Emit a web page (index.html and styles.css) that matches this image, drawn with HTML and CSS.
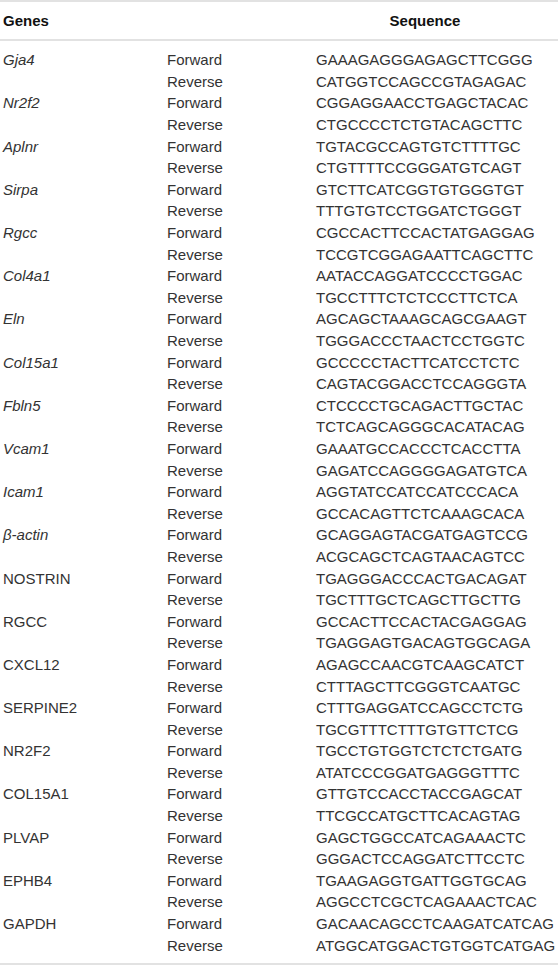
FILE: index.html
```html
<!DOCTYPE html>
<html lang="en">
<head>
    <meta charset="UTF-8">
    <meta name="viewport" content="width=device-width, initial-scale=1.0">
    <title>Primer sequences</title>
    <link rel="stylesheet" href="styles.css">
</head>
<body>
    <table class="primers">
        <colgroup>
            <col class="col-gene">
            <col class="col-dir">
            <col class="col-seq">
        </colgroup>
        <thead>
            <tr>
                <th class="gene">Genes</th>
                <th></th>
                <th class="seq">Sequence</th>
            </tr>
        </thead>
        <tbody>
            <tr><td class="gene" rowspan="2"><i>Gja4</i></td><td>Forward</td><td>GAAAGAGGGAGAGCTTCGGG</td></tr>
            <tr><td>Reverse</td><td>CATGGTCCAGCCGTAGAGAC</td></tr>
            <tr><td class="gene" rowspan="2"><i>Nr2f2</i></td><td>Forward</td><td>CGGAGGAACCTGAGCTACAC</td></tr>
            <tr><td>Reverse</td><td>CTGCCCCTCTGTACAGCTTC</td></tr>
            <tr><td class="gene" rowspan="2"><i>Aplnr</i></td><td>Forward</td><td>TGTACGCCAGTGTCTTTTGC</td></tr>
            <tr><td>Reverse</td><td>CTGTTTTCCGGGATGTCAGT</td></tr>
            <tr><td class="gene" rowspan="2"><i>Sirpa</i></td><td>Forward</td><td>GTCTTCATCGGTGTGGGTGT</td></tr>
            <tr><td>Reverse</td><td>TTTGTGTCCTGGATCTGGGT</td></tr>
            <tr><td class="gene" rowspan="2"><i>Rgcc</i></td><td>Forward</td><td>CGCCACTTCCACTATGAGGAG</td></tr>
            <tr><td>Reverse</td><td>TCCGTCGGAGAATTCAGCTTC</td></tr>
            <tr><td class="gene" rowspan="2"><i>Col4a1</i></td><td>Forward</td><td>AATACCAGGATCCCCTGGAC</td></tr>
            <tr><td>Reverse</td><td>TGCCTTTCTCTCCCTTCTCA</td></tr>
            <tr><td class="gene" rowspan="2"><i>Eln</i></td><td>Forward</td><td>AGCAGCTAAAGCAGCGAAGT</td></tr>
            <tr><td>Reverse</td><td>TGGGACCCTAACTCCTGGTC</td></tr>
            <tr><td class="gene" rowspan="2"><i>Col15a1</i></td><td>Forward</td><td>GCCCCCTACTTCATCCTCTC</td></tr>
            <tr><td>Reverse</td><td>CAGTACGGACCTCCAGGGTA</td></tr>
            <tr><td class="gene" rowspan="2"><i>Fbln5</i></td><td>Forward</td><td>CTCCCCTGCAGACTTGCTAC</td></tr>
            <tr><td>Reverse</td><td>TCTCAGCAGGGCACATACAG</td></tr>
            <tr><td class="gene" rowspan="2"><i>Vcam1</i></td><td>Forward</td><td>GAAATGCCACCCTCACCTTA</td></tr>
            <tr><td>Reverse</td><td>GAGATCCAGGGGAGATGTCA</td></tr>
            <tr><td class="gene" rowspan="2"><i>Icam1</i></td><td>Forward</td><td>AGGTATCCATCCATCCCACA</td></tr>
            <tr><td>Reverse</td><td>GCCACAGTTCTCAAAGCACA</td></tr>
            <tr><td class="gene" rowspan="2"><i>β-actin</i></td><td>Forward</td><td>GCAGGAGTACGATGAGTCCG</td></tr>
            <tr><td>Reverse</td><td>ACGCAGCTCAGTAACAGTCC</td></tr>
            <tr><td class="gene" rowspan="2">NOSTRIN</td><td>Forward</td><td>TGAGGGACCCACTGACAGAT</td></tr>
            <tr><td>Reverse</td><td>TGCTTTGCTCAGCTTGCTTG</td></tr>
            <tr><td class="gene" rowspan="2">RGCC</td><td>Forward</td><td>GCCACTTCCACTACGAGGAG</td></tr>
            <tr><td>Reverse</td><td>TGAGGAGTGACAGTGGCAGA</td></tr>
            <tr><td class="gene" rowspan="2">CXCL12</td><td>Forward</td><td>AGAGCCAACGTCAAGCATCT</td></tr>
            <tr><td>Reverse</td><td>CTTTAGCTTCGGGTCAATGC</td></tr>
            <tr><td class="gene" rowspan="2">SERPINE2</td><td>Forward</td><td>CTTTGAGGATCCAGCCTCTG</td></tr>
            <tr><td>Reverse</td><td>TGCGTTTCTTTGTGTTCTCG</td></tr>
            <tr><td class="gene" rowspan="2">NR2F2</td><td>Forward</td><td>TGCCTGTGGTCTCTCTGATG</td></tr>
            <tr><td>Reverse</td><td>ATATCCCGGATGAGGGTTTC</td></tr>
            <tr><td class="gene" rowspan="2">COL15A1</td><td>Forward</td><td>GTTGTCCACCTACCGAGCAT</td></tr>
            <tr><td>Reverse</td><td>TTCGCCATGCTTCACAGTAG</td></tr>
            <tr><td class="gene" rowspan="2">PLVAP</td><td>Forward</td><td>GAGCTGGCCATCAGAAACTC</td></tr>
            <tr><td>Reverse</td><td>GGGACTCCAGGATCTTCCTC</td></tr>
            <tr><td class="gene" rowspan="2">EPHB4</td><td>Forward</td><td>TGAAGAGGTGATTGGTGCAG</td></tr>
            <tr><td>Reverse</td><td>AGGCCTCGCTCAGAAACTCAC</td></tr>
            <tr class="last"><td class="gene" rowspan="2">GAPDH</td><td>Forward</td><td>GACAACAGCCTCAAGATCATCAG</td></tr>
            <tr class="last"><td>Reverse</td><td>ATGGCATGGACTGTGGTCATGAG</td></tr>
        </tbody>
    </table>
</body>
</html>
```

FILE: styles.css
```css
* {
    margin: 0;
    padding: 0;
    box-sizing: border-box;
}

body {
    background-color: #ffffff;
    font-family: "Liberation Sans", Arial, Helvetica, sans-serif;
    color: #333333;
}

.primers {
    width: 558px;
    table-layout: fixed;
    border-collapse: separate;
    border-spacing: 0;
    font-size: 15px;
    line-height: 21.6px;
}

.col-gene {
    width: 167px;
}

.col-dir {
    width: 149px;
}

.col-seq {
    width: 242px;
}

.primers th {
    color: #111111;
    font-weight: bold;
    text-align: left;
    padding: 8px 0 7.4px 0;
    border-top: 2px solid #e2e2e2;
    border-bottom: 2px solid #e2e2e2;
}

.primers th.seq {
    text-align: center;
    padding-right: 24px;
}

.primers td {
    padding: 0;
    vertical-align: top;
    white-space: nowrap;
}

.primers .gene {
    padding-left: 3px;
}

.primers tbody tr:first-child td {
    padding-top: 8.3px;
}

.primers tbody tr:last-child td {
    padding-bottom: 6.4px;
    border-bottom: 2px solid #e2e2e2;
}

.primers tr.last td.gene {
    padding-bottom: 6.4px;
    border-bottom: 2px solid #e2e2e2;
}
```
